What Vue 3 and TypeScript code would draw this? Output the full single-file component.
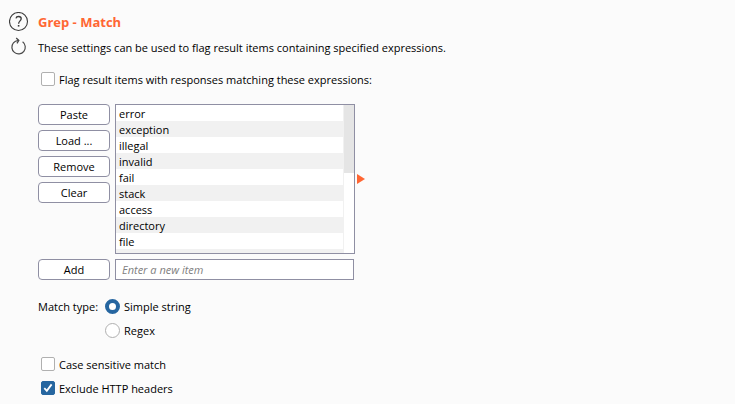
<script setup lang="ts">
import { ref } from 'vue'

const flagMatches = ref(false)
const caseSensitive = ref(false)
const excludeHeaders = ref(true)
const matchType = ref<'simple' | 'regex'>('simple')
const newItem = ref('')
const selected = ref(-1)
const expressions = ref<string[]>([
  'error', 'exception', 'illegal', 'invalid', 'fail',
  'stack', 'access', 'directory', 'file', '',
])

function addItem() {
  const value = newItem.value.trim()
  if (!value) return
  expressions.value.unshift(value)
  newItem.value = ''
}

function removeItem() {
  if (selected.value >= 0) expressions.value.splice(selected.value, 1)
  selected.value = -1
}

function clearItems() {
  expressions.value = []
}
</script>

<template>
  <main class="panel">
    <aside class="tools">
      <button class="tool" type="button" aria-label="Help">
        <svg width="20" height="20" viewBox="0 0 20 20" fill="none" stroke="#3c3c3c">
          <circle cx="9.5" cy="9.5" r="9" stroke-width="1.1" />
          <path d="M7 6.4C7.2 5.2 8.3 4.5 9.6 4.5c1.5 0 2.6.8 2.6 2.2 0 2-2.6 2.4-2.6 5" stroke-width="1.3" />
          <path d="M8.8 13h1.6v1.6H8.8z" fill="#3c3c3c" stroke="none" />
        </svg>
      </button>
      <button class="tool" type="button" aria-label="Reset">
        <svg width="20" height="20" viewBox="0 0 20 20" fill="none" stroke="#4a4a4a">
          <path d="M13.6 4.8A6.7 6.7 0 1 1 4.4 5.9Q6 3.8 9.6 3.4" stroke-width="1.2" />
          <path d="M7.2 1 9.8 3.4 8 6.4" stroke-width="1.3" />
        </svg>
      </button>
    </aside>

    <section class="content">
      <h1 class="title">Grep - Match</h1>
      <p class="description">These settings can be used to flag result items containing specified expressions.</p>

      <label class="option flag">
        <input v-model="flagMatches" type="checkbox" />
        <span>Flag result items with responses matching these expressions:</span>
      </label>

      <div class="editor">
        <div class="actions">
          <button class="btn" type="button">Paste</button>
          <button class="btn" type="button">Load ...</button>
          <button class="btn" type="button" @click="removeItem">Remove</button>
          <button class="btn" type="button" @click="clearItems">Clear</button>
        </div>
        <div class="list">
          <ul class="items">
            <li v-for="(item, i) in expressions" :key="i" @click="selected = i">{{ item }}</li>
          </ul>
          <div class="track"><div class="thumb"></div></div>
        </div>
        <svg class="marker" width="8" height="10" viewBox="0 0 8 10"><path d="M0 0 8 5 0 10z" fill="#ff6633" /></svg>
      </div>

      <form class="adder" @submit.prevent="addItem">
        <button class="btn" type="submit">Add</button>
        <input v-model="newItem" class="entry" type="text" placeholder="Enter a new item" aria-label="New item" />
      </form>

      <div class="match" role="radiogroup" aria-labelledby="match-label">
        <span id="match-label">Match type:</span>
        <div class="choices">
          <label class="option"><input v-model="matchType" type="radio" name="match" value="simple" /><span>Simple string</span></label>
          <label class="option"><input v-model="matchType" type="radio" name="match" value="regex" /><span>Regex</span></label>
        </div>
      </div>

      <div class="extras">
        <label class="option"><input v-model="caseSensitive" type="checkbox" /><span>Case sensitive match</span></label>
        <label class="option"><input v-model="excludeHeaders" type="checkbox" /><span>Exclude HTTP headers</span></label>
      </div>
    </section>
  </main>
</template>

<style>
body {
  background: #fbfbfb;
}
</style>

<style scoped>
.panel {
  display: flex;
  gap: 9px;
  padding: 12px 9px 3px;
  font: 11px/16px "Open Sans", "Noto Sans", sans-serif;
  color: #000;
}
.tools {
  display: flex;
  flex-direction: column;
  gap: 5px;
  width: 20px;
  flex: none;
}
.tool {
  display: block;
  width: 20px;
  height: 20px;
  padding: 0;
  border: 0;
  background: none;
}
.tool svg {
  display: block;
}
.content {
  flex: 1;
  min-width: 0;
}
.title {
  margin: 0;
  font-size: 13px;
  line-height: 20px;
  font-weight: 700;
  color: #ff6633;
}
.description {
  margin: 8px 0 0;
}
.option {
  display: flex;
  align-items: flex-start;
  gap: 4px;
  height: 16px;
}
.flag {
  margin: 16px 0 0 3px;
}
.option input {
  appearance: none;
  flex: none;
  width: 14px;
  height: 14px;
  margin: 0;
  border: 1px solid #b0b0b0;
  border-radius: 2px;
  background: #fff;
}
.option input[type="checkbox"]:checked {
  border-color: #2666a0;
  background: #2666a0 url("data:image/svg+xml,%3Csvg xmlns='http://www.w3.org/2000/svg' viewBox='0 0 12 12'%3E%3Cpath d='M2.3 6.2 4.8 8.8 9.6 2.4' fill='none' stroke='white' stroke-width='1.8'/%3E%3C/svg%3E") center / 12px 12px no-repeat;
}
.option input[type="radio"] {
  width: 15px;
  height: 15px;
  border-radius: 50%;
}
.option input[type="radio"]:checked {
  border: 4px solid #2666a0;
}
.editor {
  display: flex;
  align-items: flex-start;
  margin-top: 16px;
}
.actions {
  display: flex;
  flex-direction: column;
  gap: 5px;
  margin-right: 5px;
}
.btn {
  width: 72px;
  height: 21px;
  padding: 0;
  border: 1px solid #8f8fa3;
  border-radius: 4px;
  background: #fff;
  color: #000;
  font: inherit;
  line-height: 19px;
}
.list {
  display: flex;
  box-sizing: border-box;
  width: 240px;
  height: 150px;
  border: 1px solid #8f8fa3;
  background: #fff;
  overflow: hidden;
}
.items {
  flex: 1;
  margin: 0;
  padding: 0;
  list-style: none;
  border-right: 1px solid #f1f1f1;
}
.items li {
  height: 16px;
  line-height: 17px;
  padding-left: 3px;
}
.items li:nth-child(even) {
  background: #f1f1f1;
}
.track {
  width: 10px;
}
.thumb {
  height: 46%;
  background: #e5e5e5;
}
.marker {
  align-self: center;
  margin-left: 2px;
}
.adder {
  display: flex;
  gap: 5px;
  margin-top: 5px;
}
.entry {
  box-sizing: border-box;
  width: 239px;
  height: 21px;
  padding: 0 6px;
  border: 1px solid #8f8fa3;
  background: #fff;
  font: inherit;
}
.entry::placeholder {
  color: #808080;
  font-style: italic;
  opacity: 1;
}
.match {
  display: flex;
  gap: 7px;
  margin-top: 19px;
}
.choices,
.extras {
  display: flex;
  flex-direction: column;
  gap: 8px;
}
.extras {
  margin: 18px 0 0 3px;
}
</style>
